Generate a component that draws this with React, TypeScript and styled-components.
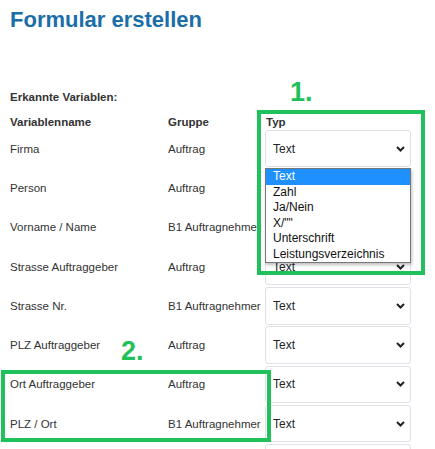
import React from 'react';
import styled, { createGlobalStyle } from 'styled-components';

const GlobalStyle = createGlobalStyle`
  body {
    margin: 0;
    background: #ffffff;
    font-family: "Liberation Sans", Arial, sans-serif;
    color: #333333;
  }
`;

const Page = styled.div`
  position: relative;
  width: 435px;
  height: 449px;
  overflow: hidden;
  padding: 7px 10px 0;
  box-sizing: border-box;
`;

const Title = styled.h1`
  margin: 0;
  font-size: 22px;
  line-height: 26px;
  font-weight: bold;
  color: #1b6ea8;
`;

const SectionLabel = styled.div`
  margin-top: 56px;
  font-size: 11.5px;
  line-height: 16px;
  font-weight: bold;
`;

const Table = styled.div`
  margin-top: 11px;
  display: grid;
  grid-template-columns: 158px 97px 146px;
  grid-template-rows: 13px repeat(9, 39.3px);
  font-size: 11.5px;
`;

const HeaderCell = styled.div<{ $indent?: number }>`
  align-self: center;
  font-weight: bold;
  line-height: 13px;
  padding-left: ${p => p.$indent ?? 0}px;
`;

const Cell = styled.div`
  align-self: center;
  white-space: nowrap;
  line-height: 14px;
`;

const SelectWrap = styled.div`
  position: relative;
  align-self: center;
`;

const SelectBox = styled.div`
  height: 37.5px;
  box-sizing: border-box;
  border: 1px solid #dee2e6;
  border-radius: 3px;
  background: #ffffff;
  display: flex;
  align-items: center;
  justify-content: space-between;
  padding: 0 5px 0 7px;
  font-size: 12px;
  color: #212529;
`;

const OptionList = styled.ul`
  position: absolute;
  top: calc(100% + 1px);
  left: 0;
  width: 100%;
  box-sizing: border-box;
  margin: 0;
  padding: 0;
  list-style: none;
  background: #ffffff;
  border: 1px solid #767676;
  box-shadow: 1px 2px 3px rgba(0, 0, 0, 0.25);
  font-size: 12px;
  color: #111111;
  z-index: 2;
`;

const Option = styled.li<{ $active?: boolean }>`
  height: 15.5px;
  line-height: 15.5px;
  padding-left: 7px;
  background: ${p => (p.$active ? '#1e90ff' : 'transparent')};
  color: ${p => (p.$active ? '#ffffff' : 'inherit')};
`;

const Marker = styled.div<{ $x: number; $y: number; $w: number; $h: number }>`
  position: absolute;
  left: ${p => p.$x}px;
  top: ${p => p.$y}px;
  width: ${p => p.$w}px;
  height: ${p => p.$h}px;
  box-sizing: border-box;
  border: 4px solid #1ec15a;
  z-index: 3;
  pointer-events: none;
`;

const StepLabel = styled.div<{ $x: number; $y: number }>`
  position: absolute;
  left: ${p => p.$x}px;
  top: ${p => p.$y}px;
  font-size: 27px;
  line-height: 1;
  font-weight: bold;
  color: #1ec15a;
  z-index: 3;
`;

const Chevron = () => (
  <svg width="9" height="6" viewBox="0 0 9 6">
    <path d="M1 1l3.5 3.5L8 1" fill="none" stroke="#222" strokeWidth="2" />
  </svg>
);

const rows = [
  { name: 'Firma', group: 'Auftrag' },
  { name: 'Person', group: 'Auftrag' },
  { name: 'Vorname / Name', group: 'B1 Auftragnehmer' },
  { name: 'Strasse Auftraggeber', group: 'Auftrag' },
  { name: 'Strasse Nr.', group: 'B1 Auftragnehmer' },
  { name: 'PLZ Auftraggeber', group: 'Auftrag' },
  { name: 'Ort Auftraggeber', group: 'Auftrag' },
  { name: 'PLZ / Ort', group: 'B1 Auftragnehmer' },
];

const types = ['Text', 'Zahl', 'Ja/Nein', 'X/""', 'Unterschrift', 'Leistungsverzeichnis'];

const App: React.FC = () => {
  return (
    <>
      <GlobalStyle />
      <Page>
        <Title>Formular erstellen</Title>
        <SectionLabel>Erkannte Variablen:</SectionLabel>
        <Table>
          <HeaderCell>Variablenname</HeaderCell>
          <HeaderCell>Gruppe</HeaderCell>
          <HeaderCell $indent={1}>Typ</HeaderCell>
          {rows.map((row, index) => (
            <React.Fragment key={index}>
              <Cell>{row.name}</Cell>
              <Cell>{row.group}</Cell>
              <SelectWrap>
                <SelectBox>
                  <span>Text</span>
                  <Chevron />
                </SelectBox>
                {index === 0 && (
                  <OptionList>
                    {types.map((type, idx) => (
                      <Option key={idx} $active={idx === 0}>{type}</Option>
                    ))}
                  </OptionList>
                )}
              </SelectWrap>
            </React.Fragment>
          ))}
          {/* next row, only its top edge shows at the bottom of the view */}
          <Cell />
          <Cell />
          <SelectWrap>
            <SelectBox />
          </SelectWrap>
        </Table>

        <StepLabel $x={290} $y={79}>1.</StepLabel>
        <Marker $x={257} $y={110} $w={168} $h={165} />
        <StepLabel $x={121} $y={338}>2.</StepLabel>
        <Marker $x={1} $y={370} $w={270} $h={72} />
      </Page>
    </>
  );
};

export default App;
